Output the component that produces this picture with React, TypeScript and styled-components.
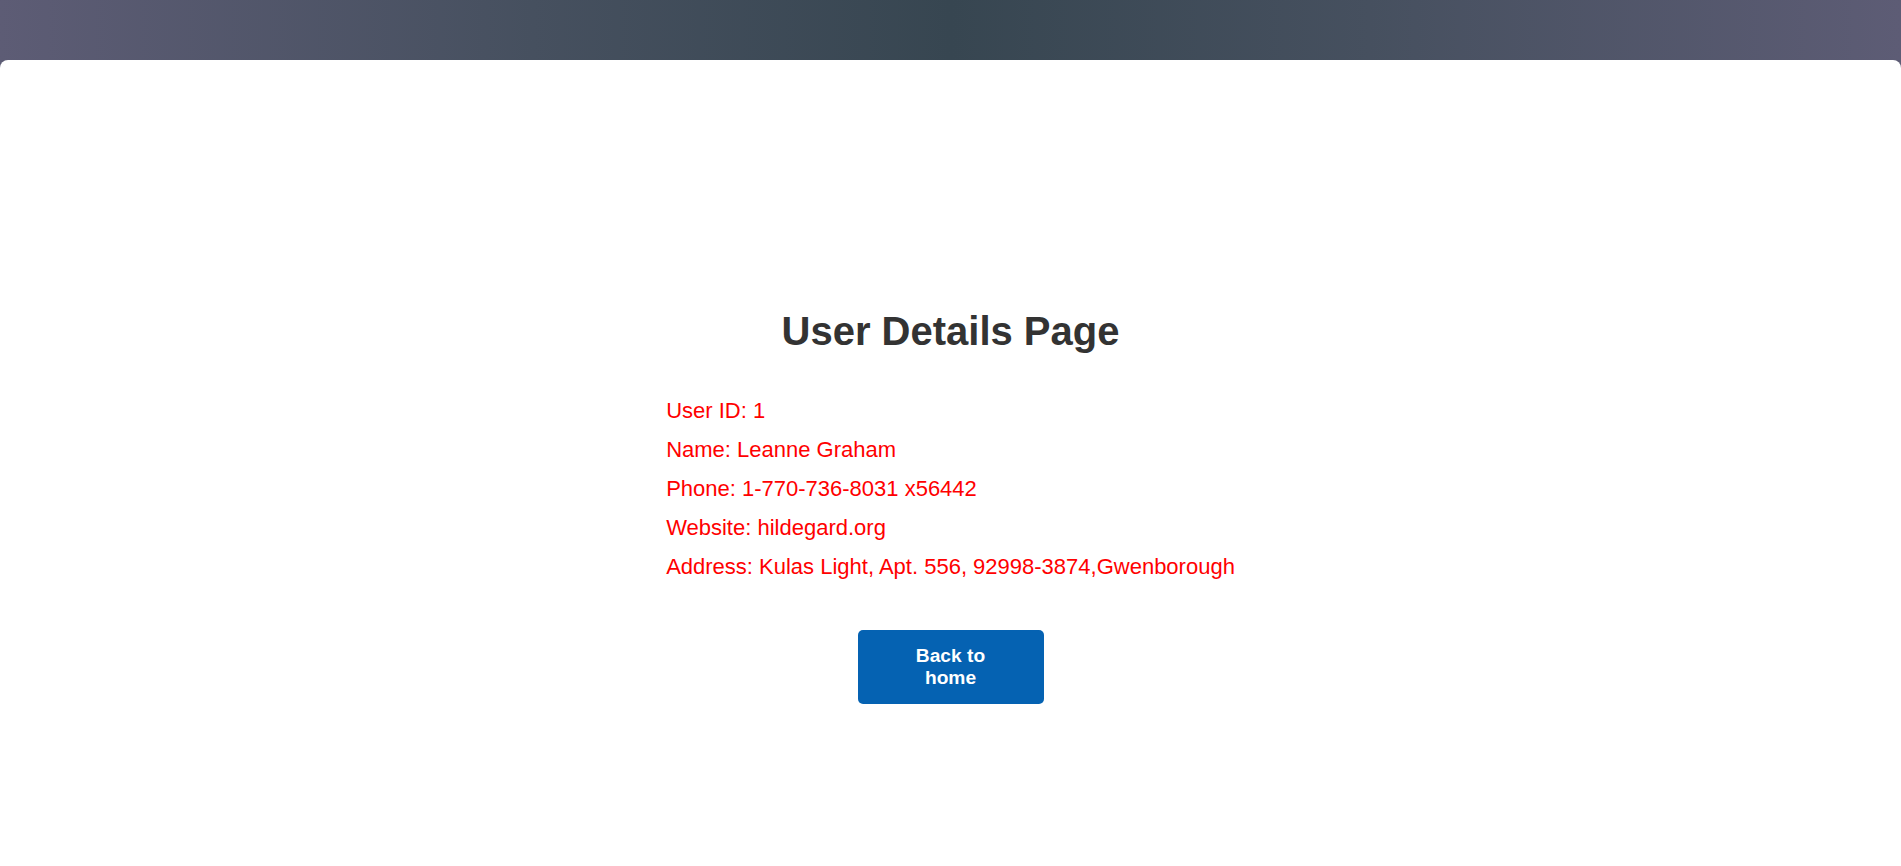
import React from "react";
import styled, { createGlobalStyle } from "styled-components";

const user = {
  id: 1,
  name: "Leanne Graham",
  phone: "1-770-736-8031 x56442",
  website: "hildegard.org",
  address: "Kulas Light, Apt. 556, 92998-3874,Gwenborough",
};

const GlobalStyle = createGlobalStyle`
  * {
    box-sizing: border-box;
  }
  body {
    margin: 0;
    font-family: "Liberation Sans", Arial, sans-serif;
    background: linear-gradient(to right, #5d5c75 0%, #46505f 28%, #374651 50%, #46505f 72%, #5d5c75 100%);
  }
`;

const Page = styled.div`
  min-height: 100vh;
  padding-top: 60px;
  display: flex;
  flex-direction: column;
`;

const Card = styled.main`
  flex: 1;
  background-color: #ffffff;
  border-radius: 8px 8px 0 0;
  display: flex;
  flex-direction: column;
  align-items: center;
  padding-top: 249px;
`;

const Title = styled.h1`
  margin: 0;
  font-size: 40px;
  font-weight: 700;
  color: #333333;
`;

const Details = styled.div`
  margin-top: 44px;
  display: flex;
  flex-direction: column;
  gap: 13px;
`;

const Line = styled.p`
  margin: 0;
  font-size: 22px;
  color: #ff0000;
`;

const BackButton = styled.button`
  margin-top: 50px;
  width: 186px;
  padding: 15px 40px;
  border: none;
  border-radius: 5px;
  background-color: #0562b2;
  color: #ffffff;
  font-family: inherit;
  font-size: 19.2px;
  font-weight: 700;
  text-align: center;
  cursor: pointer;
`;

const App = () => {
  return (
    <>
      <GlobalStyle />
      <Page>
        <Card>
          <Title>User Details Page</Title>
          <Details>
            <Line>User ID: {user.id}</Line>
            <Line>Name: {user.name}</Line>
            <Line>Phone: {user.phone}</Line>
            <Line>Website: {user.website}</Line>
            <Line>Address: {user.address}</Line>
          </Details>
          <BackButton>Back to home</BackButton>
        </Card>
      </Page>
    </>
  );
};

export default App;
